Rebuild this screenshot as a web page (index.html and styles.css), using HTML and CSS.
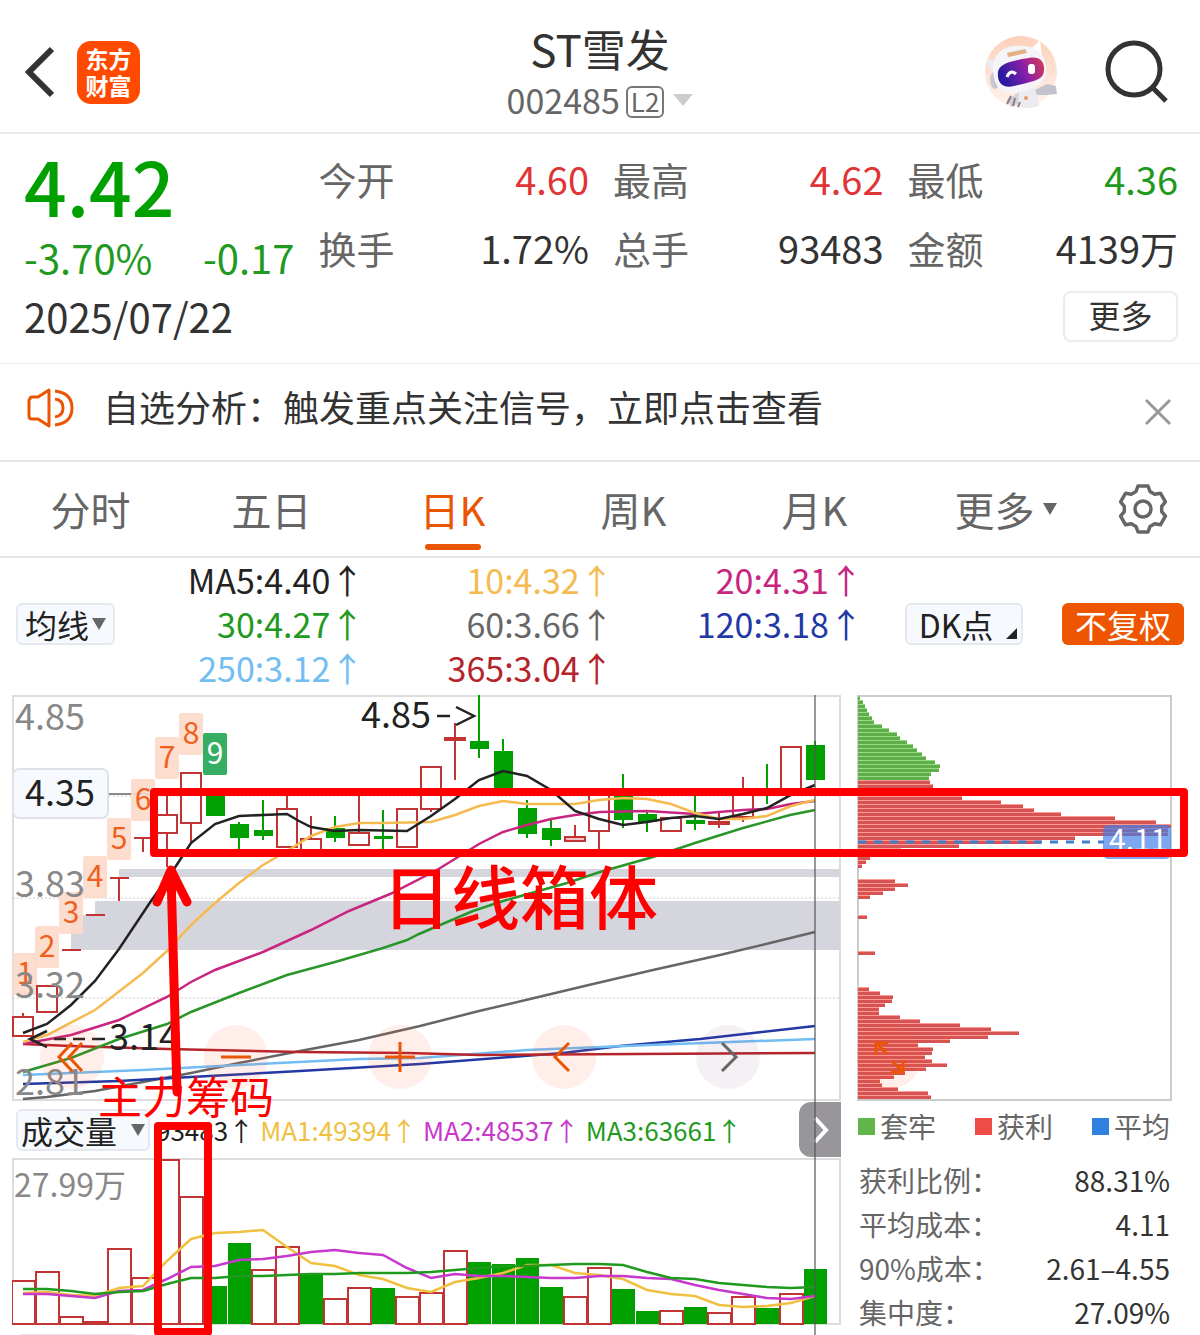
FILE: index.html
```html
<!DOCTYPE html>
<html lang="zh-CN">
<head>
	<meta charset="UTF-8">
	<meta name="viewport" content="width=device-width, initial-scale=1">
	<title>ST雪发 002485</title>
	<link rel="stylesheet" href="styles.css">
</head>
<body>
<header class="header">
	<div class="header-left">
		<button class="icon-btn" aria-label="返回">
			<svg width="30" height="52" viewBox="0 0 30 52"><path d="M28 3L5 26L28 49" fill="none" stroke="#333" stroke-width="6"/></svg>
		</button>
		<a class="logo" href="#">东方<br>财富</a>
	</div>
	<div class="header-title">
		<h1>ST雪发</h1>
		<p class="code">002485<span class="level">L2</span><i class="tri tri-light"></i></p>
	</div>
	<div class="header-right">
		<button class="icon-btn" aria-label="智能助手">
			<svg width="72" height="72" viewBox="0 0 72 72">
				<defs>
					<linearGradient id="visor" x1="0" x2="1" y1="0.3" y2="0">
						<stop offset="0" stop-color="#2a1aa0"/>
						<stop offset="0.5" stop-color="#8a1fa8"/>
						<stop offset="1" stop-color="#e03c50"/>
					</linearGradient>
					<linearGradient id="halo" x1="0" x2="0" y1="0" y2="1">
						<stop offset="0" stop-color="#fdd0bb"/>
						<stop offset="1" stop-color="#fff3ee"/>
					</linearGradient>
				</defs>
				<circle cx="36" cy="36" r="36" fill="url(#halo)"/>
				<path d="M2 21L10 26L8 38Q2 30 2 21Z" fill="#ececf2"/>
				<path d="M47 12L55 4L57 20Z" fill="#fff"/>
				<path d="M33 54L51 51L54 70Q44 74 33 70Z" fill="#ececf0"/>
				<path d="M22 64L34 56L33 68L26 71Z" fill="#d5d1d8"/>
				<path d="M26 60L22 68M30 62L28 70M35 66L33 71" stroke="#8a7d82" stroke-width="2"/>
				<path d="M50 54L62 48L71 50L72 58L62 59L52 59Z" fill="#c4c3cc"/>
				<ellipse cx="10" cy="44" rx="5" ry="9" fill="#c9c8d2"/>
				<path d="M8 32C8 14 24 8 39 10C55 11 63 24 61 36C60 48 46 55 28 57C15 58 8 48 8 32Z" fill="#f5f5f9"/>
				<path d="M22 17L40 13L42 17L23 21Z" fill="#e4b183"/>
				<path d="M13 36C14 28 24 25 44 22C55 20 60 26 59 35C58 44 50 45 29 50C17 53 12 46 13 36Z" fill="url(#visor)"/>
				<path d="M22 41Q25 33 31 38" fill="none" stroke="#fff" stroke-width="3"/>
				<rect x="43" y="28" width="7" height="10" rx="3" fill="#fff"/>
				<circle cx="41" cy="62" r="2" fill="#e39a70"/>
			</svg>
		</button>
		<button class="icon-btn" aria-label="搜索">
			<svg width="64" height="64" viewBox="0 0 64 64"><circle cx="29" cy="29" r="26" fill="none" stroke="#333" stroke-width="5"/><path d="M47 47L61 61" stroke="#333" stroke-width="5"/></svg>
		</button>
	</div>
</header>

<section class="quote">
	<div class="quote-main">
		<p class="price">4.42</p>
		<p class="change"><span>-3.70%</span><span>-0.17</span></p>
	</div>
	<dl class="stat">
		<div><dt>今开</dt><dd class="up">4.60</dd></div>
		<div><dt>换手</dt><dd>1.72%</dd></div>
	</dl>
	<dl class="stat">
		<div><dt>最高</dt><dd class="up">4.62</dd></div>
		<div><dt>总手</dt><dd>93483</dd></div>
	</dl>
	<dl class="stat">
		<div><dt>最低</dt><dd class="down">4.36</dd></div>
		<div><dt>金额</dt><dd>4139万</dd></div>
	</dl>
	<div class="quote-foot">
		<time datetime="2025-07-22">2025/07/22</time>
		<button class="more-btn">更多</button>
	</div>
</section>

<section class="notice">
	<svg width="48" height="40" viewBox="0 0 48 40"><path d="M3 11Q3 9 5 9L11 9L22 2L22 38L11 31L5 31Q2 31 2 28L2 12Z" fill="none" stroke="#ea5504" stroke-width="3" stroke-linejoin="round"/><path d="M28 11Q36 12 36 20T28 29M28 3Q45 5 45 20T28 37" fill="none" stroke="#ea5504" stroke-width="3"/></svg>
	<a href="#">自选分析：触发重点关注信号，立即点击查看</a>
	<button class="icon-btn" aria-label="关闭">
		<svg width="28" height="28" viewBox="0 0 28 28"><path d="M2 2L26 26M26 2L2 26" stroke="#999" stroke-width="3"/></svg>
	</button>
</section>

<nav class="tabs">
	<button class="tab">分时</button>
	<button class="tab">五日</button>
	<button class="tab active">日K</button>
	<button class="tab">周K</button>
	<button class="tab">月K</button>
	<button class="tab tab-more">更多<i class="tri"></i></button>
	<button class="tab" aria-label="设置">
		<svg width="50" height="50" viewBox="-25 -25 50 50"><path d="M-7 -17.5L-5 -23L5 -23L7 -17.5L11.7 -14.8L17.4 -15.8L22.4 -7.2L18.7 -2.7L18.7 2.7L22.4 7.2L17.4 15.8L11.7 14.8L7 17.5L5 23L-5 23L-7 17.5L-11.7 14.8L-17.4 15.8L-22.4 7.2L-18.7 2.7L-18.7 -2.7L-22.4 -7.2L-17.4 -15.8L-11.7 -14.8Z" fill="none" stroke="#666" stroke-width="3.5" stroke-linejoin="round"/><circle r="8" fill="none" stroke="#666" stroke-width="3.5"/></svg>
	</button>
</nav>

<section class="indicator">
	<label class="picker"><select aria-label="指标"><option>均线</option></select><i class="tri"></i></label>
	<div class="ma">
		<span class="ma5">MA5:4.40↑</span><span class="ma10">10:4.32↑</span><span class="ma20">20:4.31↑</span>
		<span class="ma30">30:4.27↑</span><span class="ma60">60:3.66↑</span><span class="ma120">120:3.18↑</span>
		<span class="ma250">250:3.12↑</span><span class="ma365">365:3.04↑</span>
	</div>
	<button class="dk-btn">DK点</button>
	<button class="fq-btn">不复权</button>
</section>

<main class="charts">
	<div class="chart-left">
		<div class="kline">
			<svg id="kline" class="chart" viewBox="12 694 829 406"></svg>
			<div class="tools">
				<button aria-label="最左"><svg width="64" height="64" viewBox="0 0 64 64"><path d="M32 18L19 32L32 46M42 18L29 32L42 46"/></svg></button>
				<button aria-label="缩小"><svg width="64" height="64" viewBox="0 0 64 64"><path d="M17 32H47"/></svg></button>
				<button aria-label="放大"><svg width="64" height="64" viewBox="0 0 64 64"><path d="M17 32H47M32 17V47"/></svg></button>
				<button aria-label="左移"><svg width="64" height="64" viewBox="0 0 64 64"><path d="M37 18L23 32L37 46"/></svg></button>
				<button class="off" aria-label="右移"><svg width="64" height="64" viewBox="0 0 64 64"><path d="M26 18L40 32L26 46"/></svg></button>
			</div>
		</div>
		<div class="vol-head">
			<label class="picker picker-vol"><select aria-label="副图指标"><option>成交量</option></select><i class="tri"></i></label>
			<span class="vol-now">93483↑</span>
			<span class="vol1">MA1:49394↑</span>
			<span class="vol2">MA2:48537↑</span>
			<span class="vol3">MA3:63661↑</span>
			<button class="next-btn" aria-label="展开">
				<svg width="16" height="28" viewBox="0 0 16 28"><path d="M2 2L13 14L2 26" fill="none" stroke="#fff" stroke-width="4"/></svg>
			</button>
		</div>
		<svg id="volume" class="chart" viewBox="12 1157 829 178"></svg>
	</div>
	<div class="chart-right">
		<div class="chip-box">
			<svg id="chips" class="chart" viewBox="857 694 315 406"></svg>
			<button class="expand-btn" aria-label="全屏"><svg width="64" height="64" viewBox="0 0 64 64"><path d="M30 29L19 18M19 30V18H31M35 36L46 47M46 35V47H34"/></svg></button>
		</div>
		<ul class="legend">
			<li class="lg-green">套牢</li>
			<li class="lg-red">获利</li>
			<li class="lg-blue">平均</li>
		</ul>
		<dl class="cost">
			<div><dt>获利比例：</dt><dd>88.31%</dd></div>
			<div><dt>平均成本：</dt><dd>4.11</dd></div>
			<div><dt>90%成本：</dt><dd>2.61–4.55</dd></div>
			<div><dt>集中度：</dt><dd>27.09%</dd></div>
		</dl>
	</div>
	<svg class="marks" viewBox="0 694 1200 641">
		<path d="M815 694V1335" stroke="#555" stroke-opacity=".6" stroke-width="2"/>
		<g fill="none" stroke="#f00" stroke-linecap="round" stroke-linejoin="round">
			<rect x="154" y="791" width="1030" height="61" stroke-width="8"/>
			<rect x="158" y="1125" width="50" height="206" stroke-width="8"/>
			<path d="M171 872L177 1091M157 901L171 869L187 901" stroke-width="9"/>
		</g>
		<text x="382" y="923" class="mark-big">日线箱体</text>
		<text x="98" y="1113" class="mark-small">主力筹码</text>
	</svg>
</main>
<script src="chart.js"></script>
</body>
</html>
```
FILE: styles.css
```css
* {
	box-sizing: border-box;
	margin: 0;
	padding: 0;
}
body {
	background-color: #fff;
	color: #333;
	font-family: "Noto Sans CJK SC", "Noto Sans", sans-serif;
	overflow-x: hidden;
}
button, select {
	border: 0;
	background: none;
	color: inherit;
	font-family: inherit;
}
a {
	color: inherit;
	text-decoration: none;
}
svg {
	display: block;
}
.tri {
	display: inline-block;
	border: 7px solid transparent;
	border-top: 12px solid #666;
	border-bottom: 0;
}
.tri-light {
	border-width: 12px 10px 0;
	border-top-color: #ccc;
}

/* 顶部 */
.header {
	display: grid;
	grid-template-columns: 1fr auto 1fr;
	height: 134px;
	padding: 0 24px;
	border-bottom: 2px solid #e9e9ed;
}
.header-left, .header-right {
	display: flex;
	align-items: center;
	gap: 23px;
	padding-bottom: 10px;
	margin-top: 21px;
	height: 112px;
}
.header-right {
	justify-content: flex-end;
	gap: 48px;
	padding-right: 7px;
}
.logo {
	width: 63px;
	height: 63px;
	padding-top: 4px;
	border-radius: 14px;
	background-color: #ff4a00;
	color: #fff;
	font-size: 23px;
	font-weight: bold;
	line-height: 27px;
	text-align: center;
}
.header-title {
	padding-top: 20px;
	text-align: center;
}
.header-title h1 {
	font-size: 44px;
	font-weight: normal;
	line-height: 56px;
}
.code {
	display: flex;
	align-items: center;
	justify-content: center;
	color: #666;
	font-size: 34px;
	line-height: 48px;
}
.level {
	height: 32px;
	padding: 0 3px;
	margin: 4px 9px 0 6px;
	border: 2px solid #777;
	border-radius: 6px;
	font-size: 26px;
	line-height: 26px;
}

/* 报价 */
.quote {
	display: grid;
	grid-template-columns: repeat(4, 1fr);
	column-gap: 24px;
	padding: 8px 22px 17px 24px;
	border-bottom: 1px solid #ececf0;
}
.price {
	color: #00a000;
	font-size: 75px;
	font-weight: 500;
	line-height: 86px;
}
.change {
	display: flex;
	justify-content: space-between;
	color: #1f9a1f;
	font-size: 40px;
	line-height: 58px;
}
.stat {
	padding-top: 2px;
	font-size: 38px;
	line-height: 69px;
}
.stat div, .cost div {
	display: flex;
	justify-content: space-between;
}
.stat dt {
	color: #666;
}
.up {
	color: #e03535;
}
.down {
	color: #1f9a1f;
}
.quote-foot {
	grid-column: 1 / -1;
	display: flex;
	align-items: center;
	justify-content: space-between;
	font-size: 40px;
	line-height: 60px;
}
.more-btn {
	width: 115px;
	height: 51px;
	padding-bottom: 4px;
	border: 2px solid #ececf0;
	border-radius: 8px;
	font-size: 32px;
	line-height: 42px;
}

/* 提示 */
.notice {
	display: flex;
	align-items: center;
	height: 98px;
	padding: 0 28px 0 27px;
	border-bottom: 2px solid #e6e6ea;
}
.notice a {
	flex: 1;
	padding: 0 0 12px 28px;
	font-size: 36px;
	line-height: 48px;
}
.notice > svg {
	margin-bottom: 9px;
}

/* 周期 */
.tabs {
	display: grid;
	grid-template-columns: repeat(6, 181fr) 114fr;
	height: 96px;
	border-bottom: 2px solid #e6e6ea;
}
.tab {
	display: flex;
	align-items: center;
	justify-content: center;
	position: relative;
	color: #666;
	font-size: 40px;
	line-height: 60px;
}
.tab-more {
	gap: 8px;
	padding-left: 20px;
}
.active {
	color: #ea5504;
}
.active::after {
	content: "";
	position: absolute;
	bottom: 6px;
	width: 56px;
	height: 6px;
	border-radius: 3px;
	background-color: #ea5504;
}

/* 均线 */
.indicator {
	display: flex;
	align-items: center;
	padding: 0 16px;
	margin-bottom: 5px;
}
.picker {
	display: flex;
	align-items: center;
	width: 99px;
	height: 42px;
	padding: 0 7px;
	border: 2px solid #e6e8f0;
	border-radius: 6px;
	background-color: #f6faff;
	color: #222;
}
.picker select {
	appearance: none;
	flex: 1;
	min-width: 0;
	font-size: 32px;
	line-height: 38px;
	height: 38px;
}
.ma {
	display: grid;
	grid-template-columns: repeat(3, 1fr);
	flex: 1;
	margin-right: 42px;
	font-size: 34px;
	line-height: 44px;
	text-align: right;
}
.ma5 { color: #222; }
.ma10 { color: #f5bb51; }
.ma20 { color: #c7257f; }
.ma30 { color: #1f9a1f; }
.ma60 { color: #666; }
.ma120 { color: #2238a5; }
.ma250 { color: #72bdf2; }
.ma365 { color: #b5232b; }
.dk-btn, .fq-btn {
	height: 42px;
	border-radius: 6px;
	font-size: 32px;
	line-height: 36px;
}
.dk-btn {
	position: relative;
	width: 118px;
	padding-right: 16px;
	border: 2px solid #e6e8f0;
	background-color: #f6faff;
	color: #222;
}
.dk-btn::after {
	content: "";
	position: absolute;
	right: 4px;
	bottom: 4px;
	border-left: 11px solid transparent;
	border-bottom: 11px solid #222;
}
.fq-btn {
	width: 122px;
	margin-left: 39px;
	background-color: #ee5500;
	color: #fff;
}

/* 图表 */
.charts {
	position: relative;
	display: grid;
	grid-template-columns: 829fr 315fr;
	gap: 16px;
	padding: 0 28px 0 12px;
}
.chart {
	width: 100%;
	height: auto;
}
.kline, .chip-box {
	position: relative;
}
.tools {
	position: absolute;
	left: 28px;
	bottom: 12px;
	display: flex;
	gap: 100px;
}
.tools button, .expand-btn {
	width: 64px;
	height: 64px;
	border-radius: 50%;
	background-color: rgba(255, 90, 40, 0.1);
	fill: none;
	stroke: #ea5504;
	stroke-width: 3px;
}
.tools .off {
	background-color: rgba(120, 60, 120, 0.08);
	stroke: #666;
}
.expand-btn {
	position: absolute;
	left: 0;
	bottom: 12px;
}
.vol-head {
	display: flex;
	align-items: center;
	gap: 6px;
	height: 57px;
	padding-left: 4px;
	font-size: 26px;
}
.picker-vol {
	width: 134px;
	padding: 0 3px 0 3px;
}
.vol-now { color: #222; }
.vol1 { color: #f0c040; }
.vol2 { color: #c738cc; }
.vol3 { color: #1f9a1f; }
.next-btn {
	width: 42px;
	height: 55px;
	padding-left: 14px;
	margin-left: auto;
	border-radius: 12px 0 0 12px;
	background-color: #98969a;
}
.legend {
	display: flex;
	justify-content: space-between;
	padding: 0 2px 0 1px;
	list-style: none;
	color: #666;
	font-size: 28px;
	line-height: 50px;
}
.legend li {
	display: flex;
	align-items: center;
	gap: 5px;
}
.legend li::before {
	content: "";
	width: 17px;
	height: 17px;
	background-color: currentColor;
}
.lg-green::before { color: #62b548; }
.lg-red::before { color: #ee4c47; }
.lg-blue::before { color: #3080e0; }
.cost {
	padding: 7px 2px 0;
	font-size: 28px;
	line-height: 44px;
}
.cost dt {
	color: #666;
}
.marks {
	position: absolute;
	top: 0;
	left: 0;
	width: 100%;
	pointer-events: none;
}
.marks text {
	fill: #f00;
}
.mark-big {
	font-size: 69px;
	font-weight: 500;
}
.mark-small {
	font-size: 44px;
}
.axis {
	fill: #888;
	font-size: 36px;
}
.axis-vol {
	fill: #888;
	font-size: 32px;
}
.peak {
	fill: #222;
	font-size: 36px;
}
.tag {
	fill: #f0601c;
	font-size: 30px;
	text-anchor: middle;
}
.tag-now {
	fill: #fff;
}
.avg {
	fill: #fff;
	font-size: 30px;
}
```
FILE: chart.js
```js
var RED = "#c23434", GREEN = "#00a000";
var STEP = 24, X0 = 23;

// 涨跌, 实体上沿, 实体下沿, 最高, 最低
var candles = [
	["r",1015,1034,1012,1034],["r",984,1010,984,1010],["r",949,949,949,949],["r",914,914,914,914],
	["r",877,877,877,900],["r",837,837,837,851],["r",813,831,795,866],["r",771,821,771,842],
	["g",793,815,793,815],["g",823,837,821,848],["g",829,835,799,839],["r",807,845,795,845],
	["r",837,850,815,850],["g",827,837,815,841],["r",831,843,795,843],["g",835,838,809,850],
	["r",807,845,807,846],["r",765,807,765,811],["r",736,738,722,779],["g",740,748,694,757],
	["g",750,788,738,788],["g",807,833,799,837],["g",827,839,818,845],["r",835,839,824,839],
	["r",792,829,792,850],["g",793,819,773,827],["g",813,821,811,831],["r",816,829,816,829],
	["g",819,823,795,829],["r",820,822,812,827],["r",787,815,776,821],["g",790,790,763,803],
	["r",745,790,745,790],["g",744,779,740,779]
];
var volumes = [1279,1270,1315,1320,1247,1276,1158,1195,1285,1242,1268,1245,1273,1297,1286,1287,1295,1291,
	1249,1261,1263,1257,1286,1295,1266,1288,1310,1309,1306,1311,1295,1307,1292,1268];
var volColors = "rrrrrrrrggrrgrrgrrrggggrrggrgrrgrg";

var maLines = [
	["#666", "23,1098 47,1096 95,1090 143,1081 191,1072 239,1062 300,1050 359,1039 420,1025 479,1010 530,998 593,983 653,969 720,954 770,942 815,931"],
	["#2238a5", "23,1083 119,1080 191,1076 300,1070 420,1063 563,1052 620,1045 700,1038 815,1025"],
	["#72bdf2", "23,1074 143,1069 239,1064 359,1058 420,1057 527,1049 650,1044 815,1038"],
	["#b5232b", "23,1043 71,1045 167,1048 300,1051 407,1052 480,1054 815,1052"],
	["#2a962a", "23,1071 71,1057 119,1038 167,1023 191,1011 239,992 287,974 335,961 383,947 407,939 419,933 473,910 503,900 567,882 600,871 653,856 695,842 743,827 790,814 815,809"],
	["#c7257f", "23,1043 71,1034 119,1019 167,996 191,981 215,969 263,951 311,929 349,910 390,893 437,869 479,843 503,831 527,824 551,818 575,814 600,811 647,810 695,813 743,809 767,808 791,803 815,800"],
	["#f5bb51", "23,1041 47,1034 95,1009 143,972 167,950 191,924 215,902 239,882 263,864 287,850 311,835 335,826 359,822 383,822 431,821 455,814 479,805 503,800 527,803 575,803 599,799 623,797 647,798 671,803 695,812 719,818 743,818 767,815 791,805 815,799"],
	["#222", "23,1032 47,1023 71,1004 95,980 119,948 151,900 174,868 191,842 215,823 239,815 263,814 287,813 299,820 311,826 335,830 359,829 407,830 431,815 455,798 479,779 503,770 527,775 551,789 575,810 599,818 623,824 647,821 671,817 695,815 719,818 743,813 767,807 791,794 815,784"]
];
var volLines = [
	["#f0c040", [1292,1291,1294,1295,1287,1285,1260,1238,1232,1231,1229,1246,1262,1265,1274,1278,1287,1291,1281,1277,1272,1264,1264,1272,1274,1278,1289,1293,1295,1304,1306,1305,1302,1295]],
	["#c738cc", [1293,1293,1295,1297,1290,1289,1278,1266,1265,1259,1258,1255,1251,1249,1252,1254,1267,1277,1273,1275,1275,1276,1277,1277,1275,1275,1277,1278,1284,1289,1293,1297,1298,1295]],
	["#1f9a1f", [1288,1288,1290,1293,1291,1290,1283,1277,1277,1275,1275,1274,1273,1273,1272,1272,1272,1271,1269,1267,1265,1265,1264,1263,1263,1264,1271,1277,1278,1282,1284,1286,1287,1286]]
];
// 序号标签: 左, 上
var tags = [[13,952],[35,925],[59,891],[83,855],[107,817],[131,778],[155,736],[179,712],[203,732]];

// 筹码分布: 起始高度, 颜色, 浅色, 每格宽度
var chipGroups = [
	[697, "#5fae4b", "#94dd7f", [2,5,7,9,11,14,16,24,31,39,42,49,55,59,64,68,77,82,81,73,71]],
	[781, "#d55353", "#ff9a94", [72,75,80,90,104,143,165,176,203,257,298,313,310,310,217,183,101,43,22,12,8,4]],
	[880, "#d55353", "#ff9a94", [37,50,37,25,12]],
	[916, "#d55353", "#ff9a94", [9]],
	[952, "#d55353", "#ff9a94", [17]],
	[988, "#d55353", "#ff9a94", [11,22,35,34,27,21,21,42,62,102,133,161,130,92,60,75,74,67,74,89,68,47,36,22,24,40,70,73]]
];

function rect(x, y, w, h, attr) {
	return `<rect x="${x}" y="${y}" width="${w}" height="${h}" ${attr}/>`;
}
function line(x1, y1, x2, y2, color, attr) {
	return `<line x1="${x1}" y1="${y1}" x2="${x2}" y2="${y2}" stroke="${color}" ${attr || 'stroke-width="2"'}/>`;
}
function poly(points, color) {
	return `<polyline points="${points}" fill="none" stroke="${color}" stroke-width="2.5"/>`;
}
function text(x, y, cls, str) {
	return `<text x="${x}" y="${y}" class="${cls}">${str}</text>`;
}

function drawKline() {
	let s = rect(13, 695, 827, 404, 'fill="none" stroke="#ddd" stroke-width="2"');
	s += '<path d="M119 868H840V876H119ZM95 900H840V949H71V914H95Z" fill="#d5d5de"/>';
	[795, 897, 997].forEach(y => s += line(13, y, 840, y, "#ccc", 'stroke-dasharray="2 2"'));
	s += line(107, 793, 155, 793, "#888");
	tags.forEach((t, i) => {
		s += rect(t[0], t[1], 24, 42, `rx="2" fill="${i == 8 ? "#35ad62" : "#fdd9c9"}" fill-opacity="${i == 8 ? 1 : 0.9}"`);
	});
	candles.forEach((c, i) => {
		let x = X0 + STEP * i, top = c[1], h = c[2] - c[1];
		let color = c[0] == "r" ? RED : GREEN;
		if (c[3] < top) s += line(x, c[3], x, top, color);
		if (c[4] > c[2]) s += line(x, c[2], x, c[4], color);
		if (h == 0) {
			if (c[0] == "r") s += line(x - 9, top, x + 10, top, color);
		} else if (c[0] == "r") {
			s += rect(x - 10, top + 1, 20, h, `fill="${h < 8 ? "#f5c0c0" : "#fff"}" stroke="${color}" stroke-width="2"`);
		} else {
			s += rect(x - 9, top, 19, h, `fill="${color}"`);
		}
	});
	maLines.forEach(m => s += poly(m[1], m[0]));
	tags.forEach((t, i) => s += text(t[0] + 12, t[1] + 31, i == 8 ? "tag tag-now" : "tag", i + 1));
	s += text(15, 729, "axis", "4.85") + text(15, 896, "axis", "3.83") + text(15, 997, "axis", "3.32") + text(15, 1094, "axis", "2.81");
	s += rect(13, 768, 95, 49, 'rx="6" fill="#f6faff" stroke="#dfe0e8" stroke-width="2"');
	s += text(25, 805, "peak", "4.35");
	s += text(361, 727, "peak", "4.85") + '<path d="M437 715H450M456 706L474 715L456 724" fill="none" stroke="#222" stroke-width="2.5"/>';
	s += '<path d="M47 1030L30 1038L47 1046M54 1038H66M73 1038H85M92 1038H105" fill="none" stroke="#222" stroke-width="2.5"/>' + text(109, 1049, "peak", "3.14");
	document.getElementById("kline").innerHTML = s;
}

function drawVolume() {
	let s = rect(13, 1158, 827, 165, 'fill="none" stroke="#ddd" stroke-width="2"');
	volumes.forEach((y, i) => {
		let x = X0 + STEP * i;
		if (volColors[i] == "r") {
			s += rect(x - 11, y + 1, 23, 1322 - y, `fill="#fff" stroke="${RED}" stroke-width="2"`);
		} else {
			s += rect(x - 11, y, 23, 1323 - y, `fill="${GREEN}"`);
		}
	});
	volLines.forEach(v => s += poly(v[1].map((y, i) => (X0 + STEP * i) + "," + y).join(" "), v[0]));
	s += text(14, 1196, "axis-vol", "27.99万");
	s += rect(18, 1334, 120, 10, 'rx="5" fill="#f6faff" stroke="#e0e2ea" stroke-width="2"');
	document.getElementById("volume").innerHTML = s;
}

function drawChips() {
	let s = rect(858, 695, 313, 404, 'fill="none" stroke="#ccc" stroke-width="2"');
	chipGroups.forEach(g => g[3].forEach((w, i) => {
		s += rect(858, g[0] + i * 4 - 2, w, 4, `fill="${g[2]}"`);
		s += rect(858, g[0] + i * 4 - 1, w, 3, `fill="${g[1]}"`);
	}));
	s += line(858, 841, 1104, 841, "#3f7fd0", 'stroke-width="3" stroke-dasharray="8 8"');
	s += rect(1103, 824, 68, 34, 'rx="5" fill="#3f7fea" fill-opacity=".68"');
	s += text(1109, 850, "avg", "4.11");
	document.getElementById("chips").innerHTML = s;
}

drawKline();
drawVolume();
drawChips();
```
